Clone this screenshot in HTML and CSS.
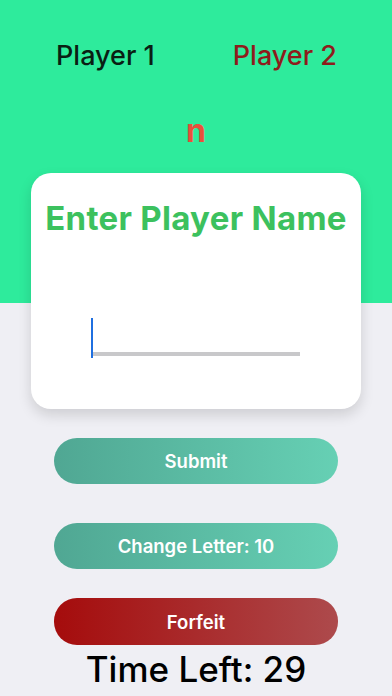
FILE: index.html
```html
<!DOCTYPE html>
<html lang="en">
<head>
<meta charset="utf-8">
<title>Word Game</title>
<link rel="stylesheet" href="styles.css">
</head>
<body>
<div class="screen">
  <div class="players">
    <span class="player p1">Player 1</span>
    <span class="player p2">Player 2</span>
  </div>
  <div class="letter">n</div>
  <div class="card">
    <h1 class="card-title">Enter Player Name</h1>
    <div class="field"><span class="caret"></span></div>
  </div>
  <div class="actions">
    <button class="btn teal submit">Submit</button>
    <button class="btn teal change">Change Letter: 10</button>
    <button class="btn red forfeit">Forfeit</button>
  </div>
  <div class="timer">Time Left: 29</div>
</div>
</body>
</html>
```

FILE: styles.css
```css
* { box-sizing: border-box; }
html, body {
  margin: 0;
  padding: 0;
}
body {
  width: 392px;
  height: 696px;
  overflow: hidden;
  font-family: Inter, "Liberation Sans", sans-serif;
  background: linear-gradient(to bottom, #2eeb9c 0, #2eeb9c 303px, #efeff4 303px, #efeff4 100%);
}
.screen {
  display: flex;
  flex-direction: column;
  align-items: center;
  height: 696px;
}
.players {
  margin-top: 40px;
  width: 100%;
  padding: 0 55px 0 56px;
  display: flex;
  justify-content: space-between;
  height: 32px;
  line-height: 32px;
  font-size: 27px;
  font-weight: 500;
}
.p1 { color: #0a1f14; }
.p2 { color: #8e1c1c; }
.letter {
  margin-top: 39px;
  height: 40px;
  line-height: 40px;
  font-size: 32px;
  font-weight: 700;
  color: #e8503b;
}
.card {
  margin-top: 22px;
  width: 330px;
  height: 236px;
  background: #ffffff;
  border-radius: 20px;
  box-shadow: 0 6px 14px rgba(0, 0, 0, 0.14);
  padding-top: 25px;
  display: flex;
  flex-direction: column;
  align-items: flex-start;
}
.card-title {
  margin: 0;
  width: 100%;
  text-align: center;
  font-size: 33px;
  letter-spacing: 0.3px;
  line-height: 40px;
  font-weight: 700;
  color: #3cc15e;
}
.field {
  position: relative;
  margin-top: 80px;
  margin-left: 60px;
  width: 209px;
  height: 38px;
  border-bottom: 4px solid #c8c8ca;
}
.caret {
  position: absolute;
  left: 0;
  top: 0;
  width: 2px;
  height: 40px;
  background: #1f6fe0;
}
.actions {
  display: flex;
  flex-direction: column;
  align-items: center;
  margin-top: 29px;
}
.btn {
  width: 284px;
  height: 46px;
  border: none;
  border-radius: 23px;
  color: #ffffff;
  font-family: Inter, "Liberation Sans", sans-serif;
  font-size: 18.5px;
  font-weight: 600;
  padding: 0;
}
.teal {
  background: linear-gradient(to right, #50a793, #66d0b4);
}
.red {
  background: linear-gradient(to right, #a50c0c, #ad4a4c);
  height: 47px;
}
.change { margin-top: 39px; }
.forfeit { margin-top: 29px; }
.timer {
  margin-top: 4px;
  font-size: 35px;
  line-height: 40px;
  font-weight: 500;
  color: #000000;
}
```
